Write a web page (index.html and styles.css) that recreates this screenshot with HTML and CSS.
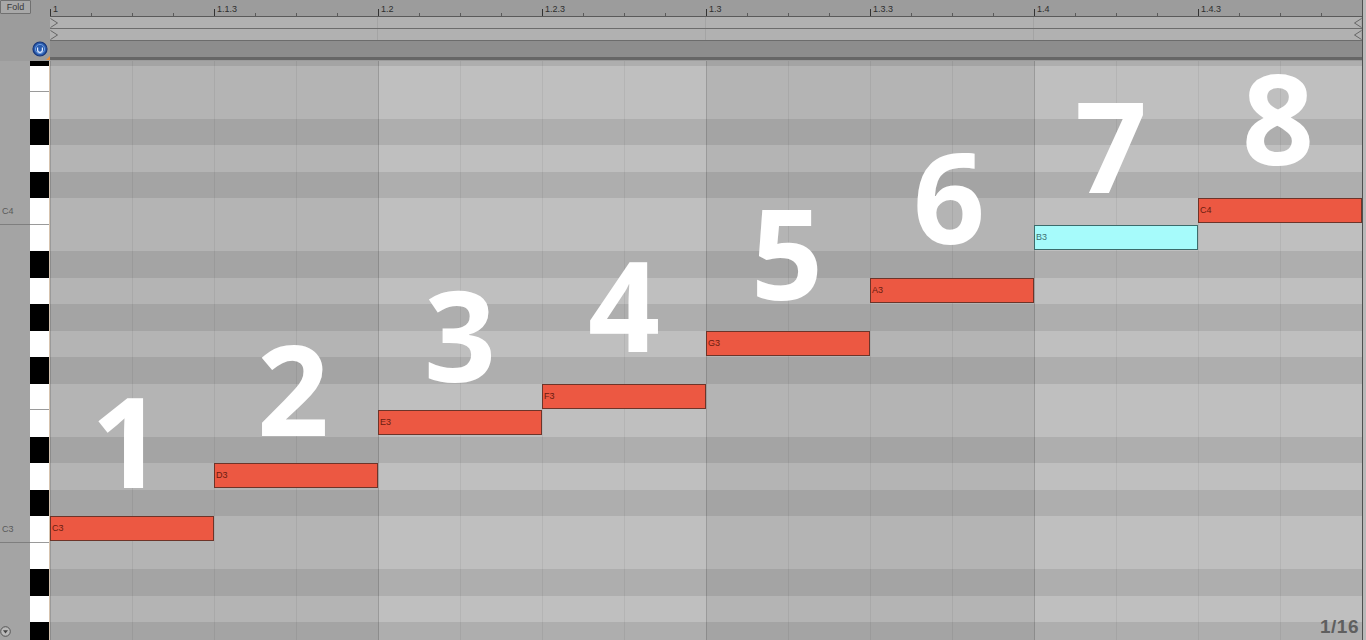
FILE: index.html
```html
<!DOCTYPE html>
<html lang="en">
<head>
  <meta charset="UTF-8">
  <meta name="viewport" content="width=device-width, initial-scale=1.0">
  <title>Piano Roll - C Major Scale</title>
  <link rel="stylesheet" href="styles.css">
</head>
<body>
  <div class="page">
    <div class="editor">
      <!-- Header: fold button, ruler, loop lanes -->
      <div class="header">
        <div class="header-left">
          <button class="fold">Fold</button>
          <svg class="preview-icon" width="16" height="16" viewBox="0 0 16 16">
            <circle cx="8" cy="8" r="7" fill="#2a5cae" stroke="#17367a" stroke-width="1.2"/>
            <circle cx="8" cy="8" r="4.6" fill="none" stroke="#6f9ee0" stroke-width="1"/>
            <path d="M5.6 6.4v2.6a2.4 2.4 0 0 0 4.8 0V6.4" fill="none" stroke="#dfeaff" stroke-width="1.2"/>
          </svg>
          <span class="corner"></span>
        </div>
        <div class="header-main">
          <div class="ruler">
            <div class="seg"><span class="tick"></span><span class="lbl">1</span></div>
            <div class="seg"><span class="tick"></span><span class="lbl">1.1.3</span></div>
            <div class="seg"><span class="tick"></span><span class="lbl">1.2</span></div>
            <div class="seg"><span class="tick"></span><span class="lbl">1.2.3</span></div>
            <div class="seg"><span class="tick"></span><span class="lbl">1.3</span></div>
            <div class="seg"><span class="tick"></span><span class="lbl">1.3.3</span></div>
            <div class="seg"><span class="tick"></span><span class="lbl">1.4</span></div>
            <div class="seg"><span class="tick"></span><span class="lbl">1.4.3</span></div>
          </div>
          <div class="lane">
            <svg width="9" height="10" viewBox="0 0 9 10"><polyline points="0.5,0.5 7.5,5 0.5,9.5" fill="none" stroke="#666" stroke-width="1"/></svg>
            <svg width="9" height="10" viewBox="0 0 9 10"><polyline points="8.5,0.5 1.5,5 8.5,9.5" fill="none" stroke="#666" stroke-width="1"/></svg>
          </div>
          <div class="lane">
            <svg width="9" height="10" viewBox="0 0 9 10"><polyline points="0.5,0.5 7.5,5 0.5,9.5" fill="none" stroke="#666" stroke-width="1"/></svg>
            <svg width="9" height="10" viewBox="0 0 9 10"><polyline points="8.5,0.5 1.5,5 8.5,9.5" fill="none" stroke="#666" stroke-width="1"/></svg>
          </div>
          <div class="scroll-band"></div>
        </div>
      </div>

      <!-- Body: keyboard + note grid -->
      <div class="body">
        <div class="piano">
          <div class="keys">
            <div class="key-row partial"><span class="label"></span><span class="key black"></span></div>
            <div class="key-row split"><span class="label"></span><span class="key"></span></div>
            <div class="key-row"><span class="label"></span><span class="key"></span></div>
            <div class="key-row"><span class="label"></span><span class="key black"></span></div>
            <div class="key-row"><span class="label"></span><span class="key"></span></div>
            <div class="key-row"><span class="label"></span><span class="key black"></span></div>
            <div class="key-row split"><span class="label">C4</span><span class="key"></span></div>
            <div class="key-row"><span class="label"></span><span class="key"></span></div>
            <div class="key-row"><span class="label"></span><span class="key black"></span></div>
            <div class="key-row"><span class="label"></span><span class="key"></span></div>
            <div class="key-row"><span class="label"></span><span class="key black"></span></div>
            <div class="key-row"><span class="label"></span><span class="key"></span></div>
            <div class="key-row"><span class="label"></span><span class="key black"></span></div>
            <div class="key-row split"><span class="label"></span><span class="key"></span></div>
            <div class="key-row"><span class="label"></span><span class="key"></span></div>
            <div class="key-row"><span class="label"></span><span class="key black"></span></div>
            <div class="key-row"><span class="label"></span><span class="key"></span></div>
            <div class="key-row"><span class="label"></span><span class="key black"></span></div>
            <div class="key-row split"><span class="label">C3</span><span class="key"></span></div>
            <div class="key-row"><span class="label"></span><span class="key"></span></div>
            <div class="key-row"><span class="label"></span><span class="key black"></span></div>
            <div class="key-row"><span class="label"></span><span class="key"></span></div>
            <div class="key-row"><span class="label"></span><span class="key black"></span></div>
          </div>
          <svg class="zoom-icon" width="11" height="11" viewBox="0 0 11 11">
            <circle cx="5.5" cy="5.5" r="4.8" fill="#b9b9b9" stroke="#555" stroke-width="1"/>
            <polygon points="3,4.2 8,4.2 5.5,7.6" fill="#444"/>
          </svg>
        </div>

        <div class="roll">
          <div class="rows">
            <div class="row black partial"></div>
            <div class="row"></div>
            <div class="row"></div>
            <div class="row black"></div>
            <div class="row"></div>
            <div class="row black"></div>
            <div class="row"></div>
            <div class="row"></div>
            <div class="row black"></div>
            <div class="row"></div>
            <div class="row black"></div>
            <div class="row"></div>
            <div class="row black"></div>
            <div class="row"></div>
            <div class="row"></div>
            <div class="row black"></div>
            <div class="row"></div>
            <div class="row black"></div>
            <div class="row"></div>
            <div class="row"></div>
            <div class="row black"></div>
            <div class="row"></div>
            <div class="row black"></div>
          </div>

          <!-- notes: left = step * 164px, top = C3 row - semitones * 26.5px -->
          <div class="note" style="left: 0px; top: 455px;">C3</div>
          <div class="note" style="left: 164px; top: 402px;">D3</div>
          <div class="note" style="left: 328px; top: 349px;">E3</div>
          <div class="note" style="left: 492px; top: 322.5px;">F3</div>
          <div class="note" style="left: 656px; top: 269.5px;">G3</div>
          <div class="note" style="left: 820px; top: 216.5px;">A3</div>
          <div class="note selected" style="left: 984px; top: 163.5px;">B3</div>
          <div class="note" style="left: 1148px; top: 137px;">C4</div>

          <div class="step" style="left: 27px; top: 328px;">1</div>
          <div class="step" style="left: 193px; top: 276px;">2</div>
          <div class="step" style="left: 360px; top: 222px;">3</div>
          <div class="step" style="left: 524px; top: 192px;">4</div>
          <div class="step" style="left: 687px; top: 140px;">5</div>
          <div class="step" style="left: 849px; top: 84px;">6</div>
          <div class="step" style="left: 1011px; top: 33px;">7</div>
          <div class="step" style="left: 1178px; top: 5px;">8</div>

          <div class="grid-size">1/16</div>
        </div>
      </div>
    </div>
    <div class="edge"></div>
  </div>
</body>
</html>
```

FILE: styles.css
```css
body {
  margin: 0;
  width: 1366px;
  height: 640px;
  overflow: hidden;
  font-family: "Liberation Sans", Arial, sans-serif;
  background-color: #9d9d9d;
}

.page {
  display: flex;
  height: 640px;
}

.editor {
  width: 1362px;
  display: flex;
  flex-direction: column;
}

.edge {
  width: 3px;
  border-left: 1px solid #4f4f4f;
  background-color: #b9b9b9;
}

/* Header */
.header {
  display: flex;
  flex-shrink: 0;
  height: 61px;
  background-color: #9c9c9c;
}

.header-left {
  position: relative;
  width: 50px;
}

.fold {
  display: block;
  width: 31px;
  height: 14px;
  padding: 0;
  margin: 0;
  font-family: "Liberation Sans", Arial, sans-serif;
  font-size: 9px;
  line-height: 12px;
  color: #3a3a3a;
  background-color: #a8a8a8;
  border: 1px solid #707070;
  border-radius: 1px;
}

.preview-icon {
  position: absolute;
  left: 32px;
  top: 41px;
}

.corner {
  position: absolute;
  right: 0;
  top: 56px;
  width: 0;
  height: 0;
  border-left: 4px solid transparent;
  border-bottom: 4px solid #e8903a;
}

.header-main {
  flex: 1;
  display: flex;
  flex-direction: column;
}

.ruler {
  display: flex;
  height: 16px;
  border-bottom: 1px solid #5a5a5a;
  background-image: linear-gradient(90deg, #5a5a5a 0 1px, transparent 1px);
  background-size: 41px 3px;
  background-repeat: repeat-x;
  background-position: left bottom;
}

.seg {
  width: 164px;
  display: flex;
  align-items: flex-end;
}

.seg .tick {
  width: 1px;
  height: 7px;
  background-color: #333;
}

.seg .lbl {
  align-self: flex-start;
  margin-top: 5px;
  margin-left: 2px;
  font-size: 9px;
  line-height: 9px;
  color: #2e2e2e;
}

.lane {
  display: flex;
  justify-content: space-between;
  align-items: center;
  height: 11px;
  background-color: #b1b1b1;
  border-bottom: 1px solid #6c6c6c;
  background-image: linear-gradient(90deg, transparent 327px, #a4a4a4 327px 328px, transparent 328px);
  background-size: 328px 100%;
}

.scroll-band {
  height: 16px;
  background-color: #8d8d8d;
  border-bottom: 3px solid #666;
}

/* Body */
.body {
  flex: 1;
  min-height: 0;
  display: flex;
}

.piano {
  position: relative;
  width: 50px;
  overflow: hidden;
  background-color: #a4a4a4;
}

.key-row {
  display: flex;
  height: 26.5px;
}

.key-row.partial {
  height: 4.5px;
}

.key-row .label {
  width: 30px;
  padding-left: 2px;
  box-sizing: border-box;
  font-size: 9px;
  line-height: 26.5px;
  color: #5a5a5a;
}

.key-row .key {
  width: 20px;
  background-color: #ffffff;
}

.key-row .key.black {
  background-color: #000000;
}

.key-row.split .key {
  box-shadow: inset 0 -1px 0 #9a9a9a;
}

.key-row.split .label:not(:empty) {
  box-shadow: inset 0 -1px 0 #7e7e7e;
}

.zoom-icon {
  position: absolute;
  left: 0;
  bottom: 3px;
}

.roll {
  position: relative;
  width: 1312px;
  border-left: 1px solid #d6c3ae;
  margin-left: -1px;
  background-color: #b4b4b4;
  background-image:
    linear-gradient(90deg, #9a9a9a 0 1px, transparent 1px),
    linear-gradient(90deg, rgba(0, 0, 0, 0.06) 0 1px, transparent 1px),
    linear-gradient(90deg, transparent 328px, #bfbfbf 328px);
  background-size: 328px 100%, 82px 100%, 656px 100%;
}

.rows {
  height: 100%;
  overflow: hidden;
}

.row {
  height: 26.5px;
}

.row.partial {
  height: 4.5px;
}

.row.black {
  background-color: rgba(0, 0, 0, 0.085);
}

.note {
  position: absolute;
  width: 164px;
  height: 25px;
  box-sizing: border-box;
  padding-left: 1px;
  background-color: #ec5842;
  border: 1px solid #6d3429;
  font-size: 9px;
  line-height: 23px;
  color: #6a1c10;
}

.note.selected {
  background-color: #a6fbfb;
  border-color: #3c6b6b;
  color: #3f6f70;
}

.step {
  position: absolute;
  width: 100px;
  text-align: center;
  font-family: "Open Sans", Roboto, sans-serif;
  font-weight: 700;
  font-size: 126px;
  line-height: 0.8;
  color: #ffffff;
}

.grid-size {
  position: absolute;
  right: 3px;
  bottom: 2px;
  font-size: 19px;
  font-weight: 700;
  letter-spacing: 0.5px;
  color: #5f5f5f;
}
```
